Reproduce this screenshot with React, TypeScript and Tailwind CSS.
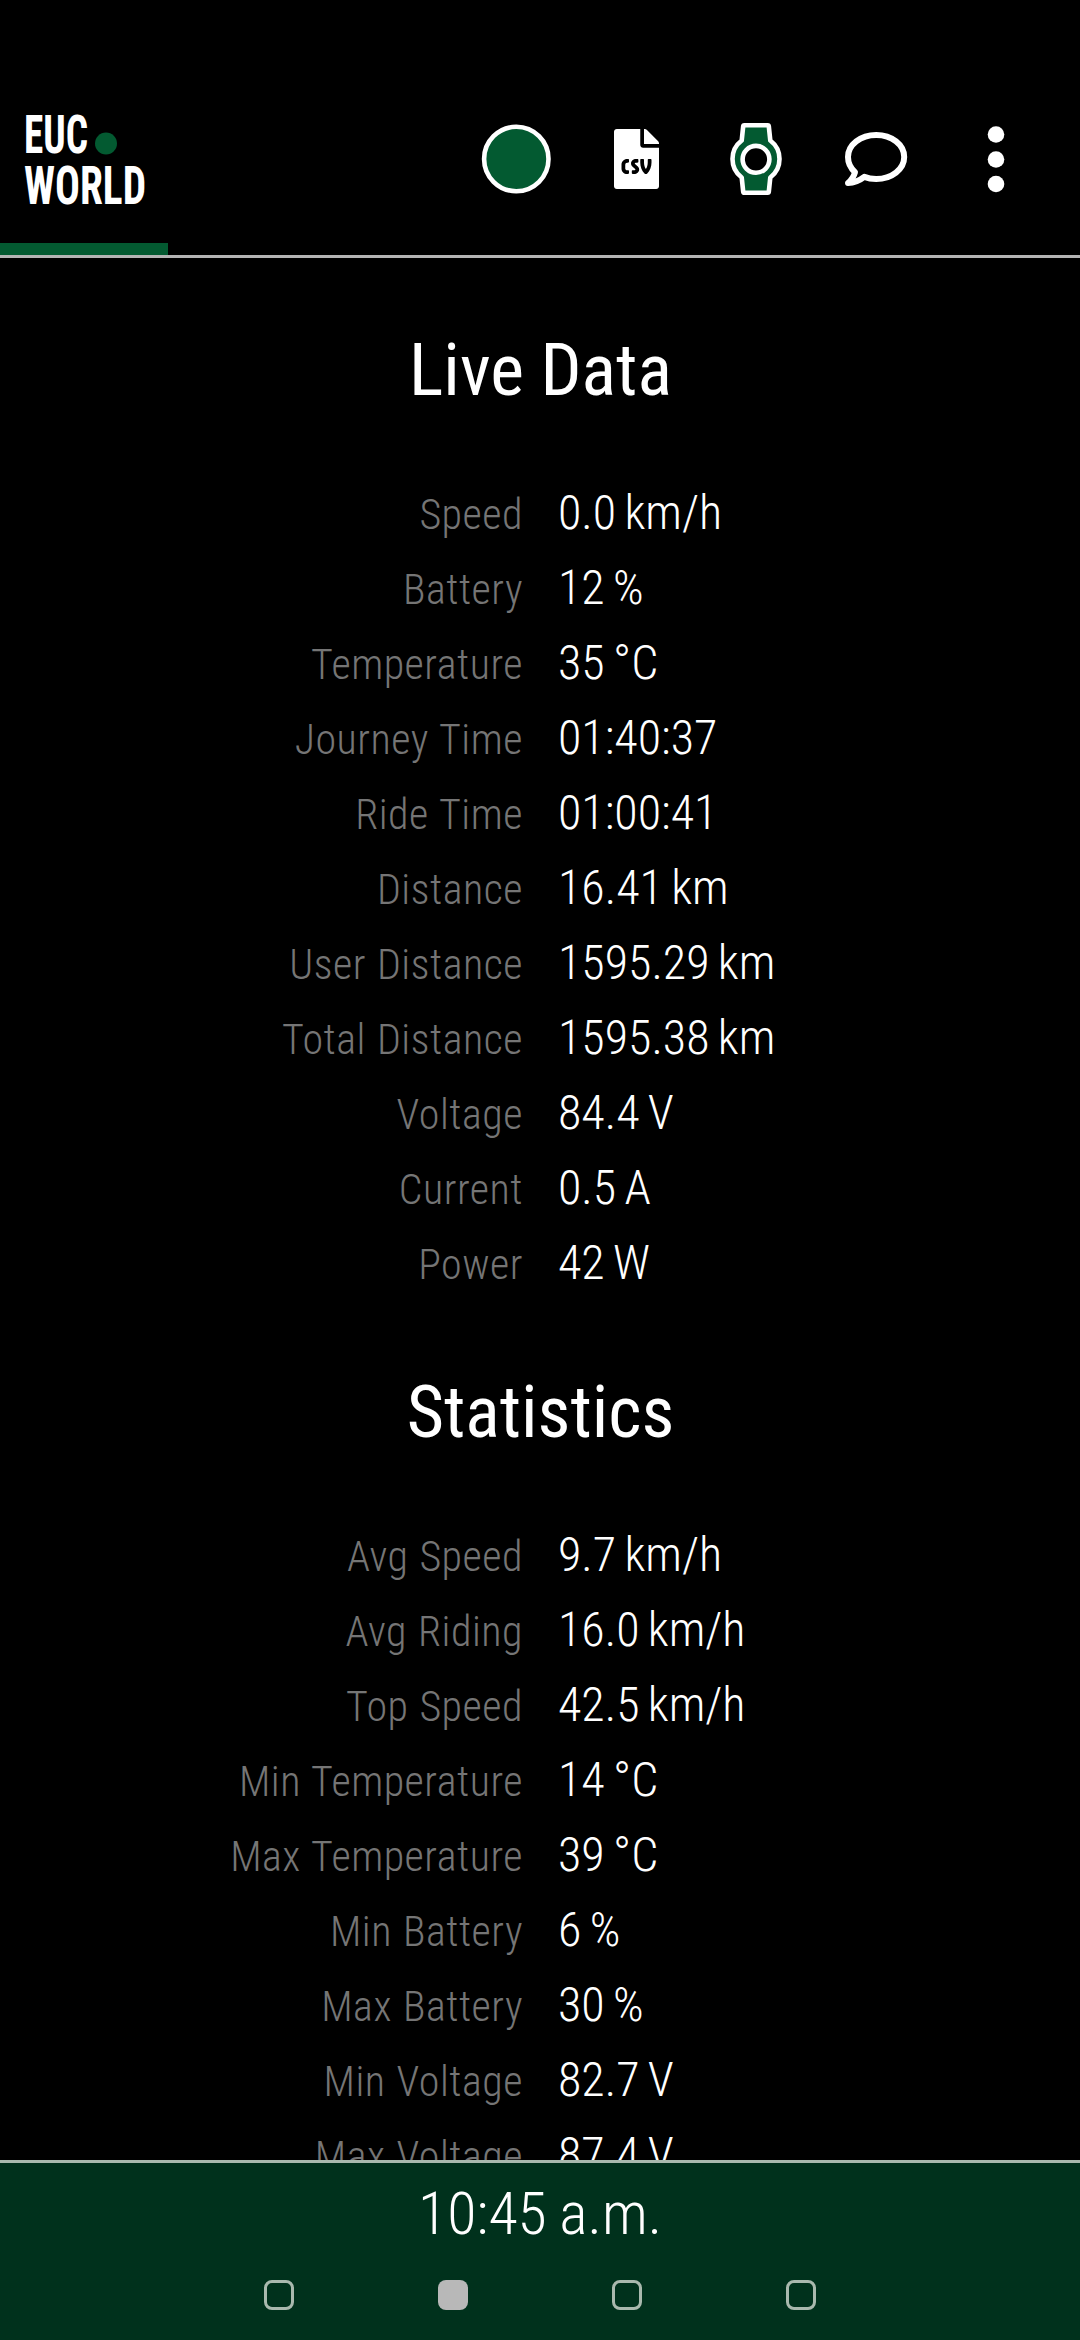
import type { ReactNode } from 'react';
import { FaFileCsv } from 'react-icons/fa';

type Row = { label: string; value: string };

const liveData: Row[] = [
  { label: 'Speed', value: '0.0 km/h' },
  { label: 'Battery', value: '12 %' },
  { label: 'Temperature', value: '35 °C' },
  { label: 'Journey Time', value: '01:40:37' },
  { label: 'Ride Time', value: '01:00:41' },
  { label: 'Distance', value: '16.41 km' },
  { label: 'User Distance', value: '1595.29 km' },
  { label: 'Total Distance', value: '1595.38 km' },
  { label: 'Voltage', value: '84.4 V' },
  { label: 'Current', value: '0.5 A' },
  { label: 'Power', value: '42 W' },
];

const statistics: Row[] = [
  { label: 'Avg Speed', value: '9.7 km/h' },
  { label: 'Avg Riding', value: '16.0 km/h' },
  { label: 'Top Speed', value: '42.5 km/h' },
  { label: 'Min Temperature', value: '14 °C' },
  { label: 'Max Temperature', value: '39 °C' },
  { label: 'Min Battery', value: '6 %' },
  { label: 'Max Battery', value: '30 %' },
  { label: 'Min Voltage', value: '82.7 V' },
  { label: 'Max Voltage', value: '87.4 V' },
];

const pages = ['Dashboard', 'Details', 'Tour', 'Map'];
const activePage = 1;

function Logo() {
  return (
    <svg width="168" height="120" viewBox="0 0 168 120" className="block fill-white font-bold">
      <text x="24" y="53" fontSize="54" textLength="64" lengthAdjust="spacingAndGlyphs">
        EUC
      </text>
      <circle cx="106" cy="43.5" r="11" className="fill-[#035a31]" />
      <text x="24" y="104" fontSize="54" textLength="122" lengthAdjust="spacingAndGlyphs">
        WORLD
      </text>
    </svg>
  );
}

function RecordIcon() {
  return (
    <svg width="72" height="72" viewBox="0 0 72 72">
      <circle cx="36.3" cy="36" r="32.2" fill="#035a31" stroke="#fff" strokeWidth="4.6" />
    </svg>
  );
}

function WatchIcon() {
  return (
    <svg width="72" height="72" viewBox="0 0 72 72" stroke="#fff" strokeWidth="4.6" strokeLinejoin="round">
      <path
        d="M24.3 2.3h23.4q1 0 1.1 1l1.5 14.2A23.2 23.2 0 0 1 50.3 54.5l-1.5 14.2q-.1 1-1.1 1H24.3q-1 0-1.1-1L21.7 54.5A23.2 23.2 0 0 1 21.7 17.5l1.5-14.2q.1-1 1.1-1z"
        fill="#035a31"
      />
      <circle cx="36" cy="36.3" r="13.4" fill="#000" />
    </svg>
  );
}

function CommentIcon() {
  return (
    <svg width="72" height="72" viewBox="0 0 72 72" fill="none" stroke="#fff" strokeWidth="6" strokeLinejoin="round">
      <path d="M15 49.2C10.5 45 8 39.7 8 34 8 21.8 20.5 12 36.2 12S64.200 21.800 64.200 34 51.700 56 36.200 56C31.800 56 27.800 55.300 24.300 53.900 19.800 57.400 13.800 59.800 8 60 11.500 57 14 53 15 49.200Z" />
    </svg>
  );
}

function MoreIcon() {
  return (
    <svg width="72" height="72" viewBox="0 0 72 72" fill="#fff">
      <circle cx="36" cy="11.5" r="8.3" />
      <circle cx="36" cy="36.5" r="8.3" />
      <circle cx="36" cy="61" r="8.3" />
    </svg>
  );
}

function ToolbarButton({ label, children }: { label: string; children: ReactNode }) {
  return (
    <button type="button" aria-label={label} className="flex h-[120px] w-[120px] items-center justify-center">
      {children}
    </button>
  );
}

function Section({ title, rows }: { title: string; rows: Row[] }) {
  return (
    <section className="pt-[71px]">
      <h2 className="pb-[62px] pl-px text-center text-[72px] leading-[84px] font-normal">{title}</h2>
      <dl>
        {rows.map((row) => (
          <div key={row.label} className="flex h-[75px] items-baseline font-light">
            <dt className="w-1/2 pr-[17px] text-right text-[42px] leading-[75px] tracking-[0.5px] text-[#757575] [word-spacing:1px]">
              {row.label}
            </dt>
            <dd className="w-1/2 pl-[18px] text-[48px] leading-[75px] [word-spacing:-2.5px]">{row.value}</dd>
          </div>
        ))}
      </dl>
    </section>
  );
}

export default function App() {
  return (
    <div className="flex h-[2340px] w-[1080px] flex-col overflow-hidden bg-black font-['Roboto_Condensed','Roboto',sans-serif] font-stretch-condensed text-white">
      <header className="flex h-[258px] shrink-0 items-end justify-between border-b-[3px] border-[#b4b4b4]">
        <div className="flex h-[155px] w-[168px] flex-col justify-between">
          <Logo />
          <div className="h-3 bg-[#035a31]" />
        </div>
        <nav className="flex pr-6 pb-9">
          <ToolbarButton label="Record">
            <RecordIcon />
          </ToolbarButton>
          <ToolbarButton label="Export">
            <FaFileCsv className="h-[60px] w-[45px]" />
          </ToolbarButton>
          <ToolbarButton label="Watch">
            <WatchIcon />
          </ToolbarButton>
          <ToolbarButton label="Voice">
            <CommentIcon />
          </ToolbarButton>
          <ToolbarButton label="More">
            <MoreIcon />
          </ToolbarButton>
        </nav>
      </header>

      <main className="min-h-0 flex-1 overflow-hidden">
        <Section title="Live Data" rows={liveData} />
        <Section title="Statistics" rows={statistics} />
      </main>

      <footer className="flex h-[180px] shrink-0 flex-col items-center border-t-[3px] border-[#a9b9ae] bg-[#00311c] pt-4">
        <p className="text-[60px] leading-[70px] font-light [word-spacing:-1px]">10:45 a.m.</p>
        <div className="mt-[31px] flex gap-[144px]">
          {pages.map((page, i) => (
            <span
              key={page}
              className={
                i === activePage
                  ? 'size-[30px] rounded-lg bg-[#b8b8b8]'
                  : 'size-[30px] rounded-lg border-[3px] border-[#a9b9ae]'
              }
            />
          ))}
        </div>
      </footer>
    </div>
  );
}
